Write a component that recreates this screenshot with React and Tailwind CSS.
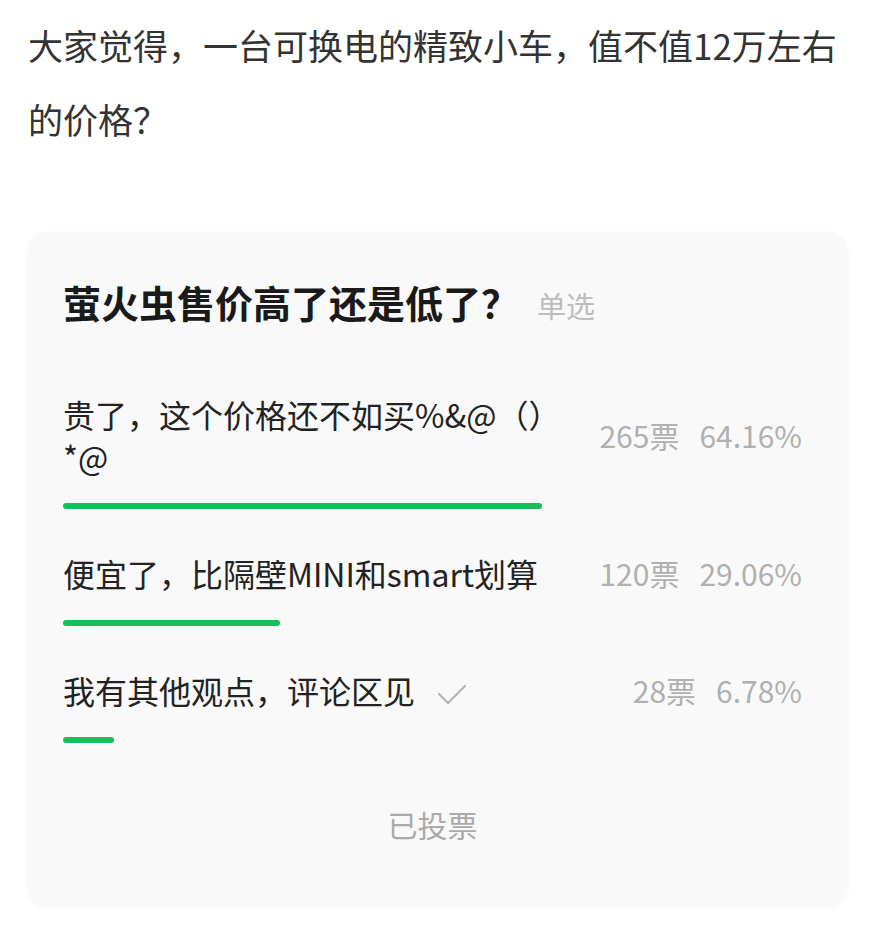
import { useState } from 'react';

const options = [
  { text: '贵了，这个价格还不如买%&@（）*@', votes: 265, pct: 64.16 },
  { text: '便宜了，比隔壁MINI和smart划算', votes: 120, pct: 29.06 },
  { text: '我有其他观点，评论区见', votes: 28, pct: 6.78, mine: true },
];

const maxPct = Math.max(...options.map((o) => o.pct));

const CheckMark = () => (
  <svg width="30" height="22" viewBox="0 0 30 22" className="ml-[22px] inline-block">
    <path d="M2 10 L11 19 L28 2" fill="none" stroke="#b3b3b3" strokeWidth="2.2" strokeLinecap="round" strokeLinejoin="round" />
  </svg>
);

const PollOption = ({ option }) => (
  <div>
    <div className="flex items-center">
      <div className="w-[500px] text-[32px] leading-[42px] text-[#222]">
        {option.text}
        {option.mine && <CheckMark />}
      </div>
      <div className="flex flex-1 justify-end gap-[20px] text-[30px] leading-[42px] text-[#b0b0b0]">
        <span>{option.votes}票</span>
        <span>{option.pct.toFixed(2)}%</span>
      </div>
    </div>
    <div className="mt-[26px] h-[6px] w-[479px]">
      <div
        className="h-full rounded-full bg-[#19be5c]"
        style={{ width: `${(option.pct / maxPct) * 100}%` }}
      />
    </div>
  </div>
);

export default function App() {
  const [voted] = useState(true);

  return (
    <div className="w-[879px] h-[932px] overflow-hidden bg-white pt-[8px] font-['Noto_Sans_CJK_SC','Noto_Sans',sans-serif]">
      <p className="px-[28px] text-[35px] leading-[74px] text-[#333]">
        大家觉得，一台可换电的精致小车，值不值12万左右的价格？
      </p>

      <div className="ml-[28px] mr-[32px] mt-[76px] rounded-[18px] bg-[#f9f9f9] pl-[35px] pr-[45px] pt-[46px] pb-[59px] shadow-[0_2px_6px_rgba(0,0,0,0.04)]">
        <div className="flex items-baseline">
          <h2 className="text-[38px] font-bold leading-[48px] text-[#1a1a1a]">萤火虫售价高了还是低了？</h2>
          <span className="ml-[18px] text-[29px] text-[#bdbdbd]">单选</span>
        </div>

        <div className="mt-[65px] flex flex-col gap-[43px]">
          {options.map((o) => (
            <PollOption key={o.text} option={o} />
          ))}
        </div>

        <div className="mt-[59px] text-center text-[30px] leading-[44px] text-[#aaa]">
          {voted ? '已投票' : '投票'}
        </div>
      </div>
    </div>
  );
}
